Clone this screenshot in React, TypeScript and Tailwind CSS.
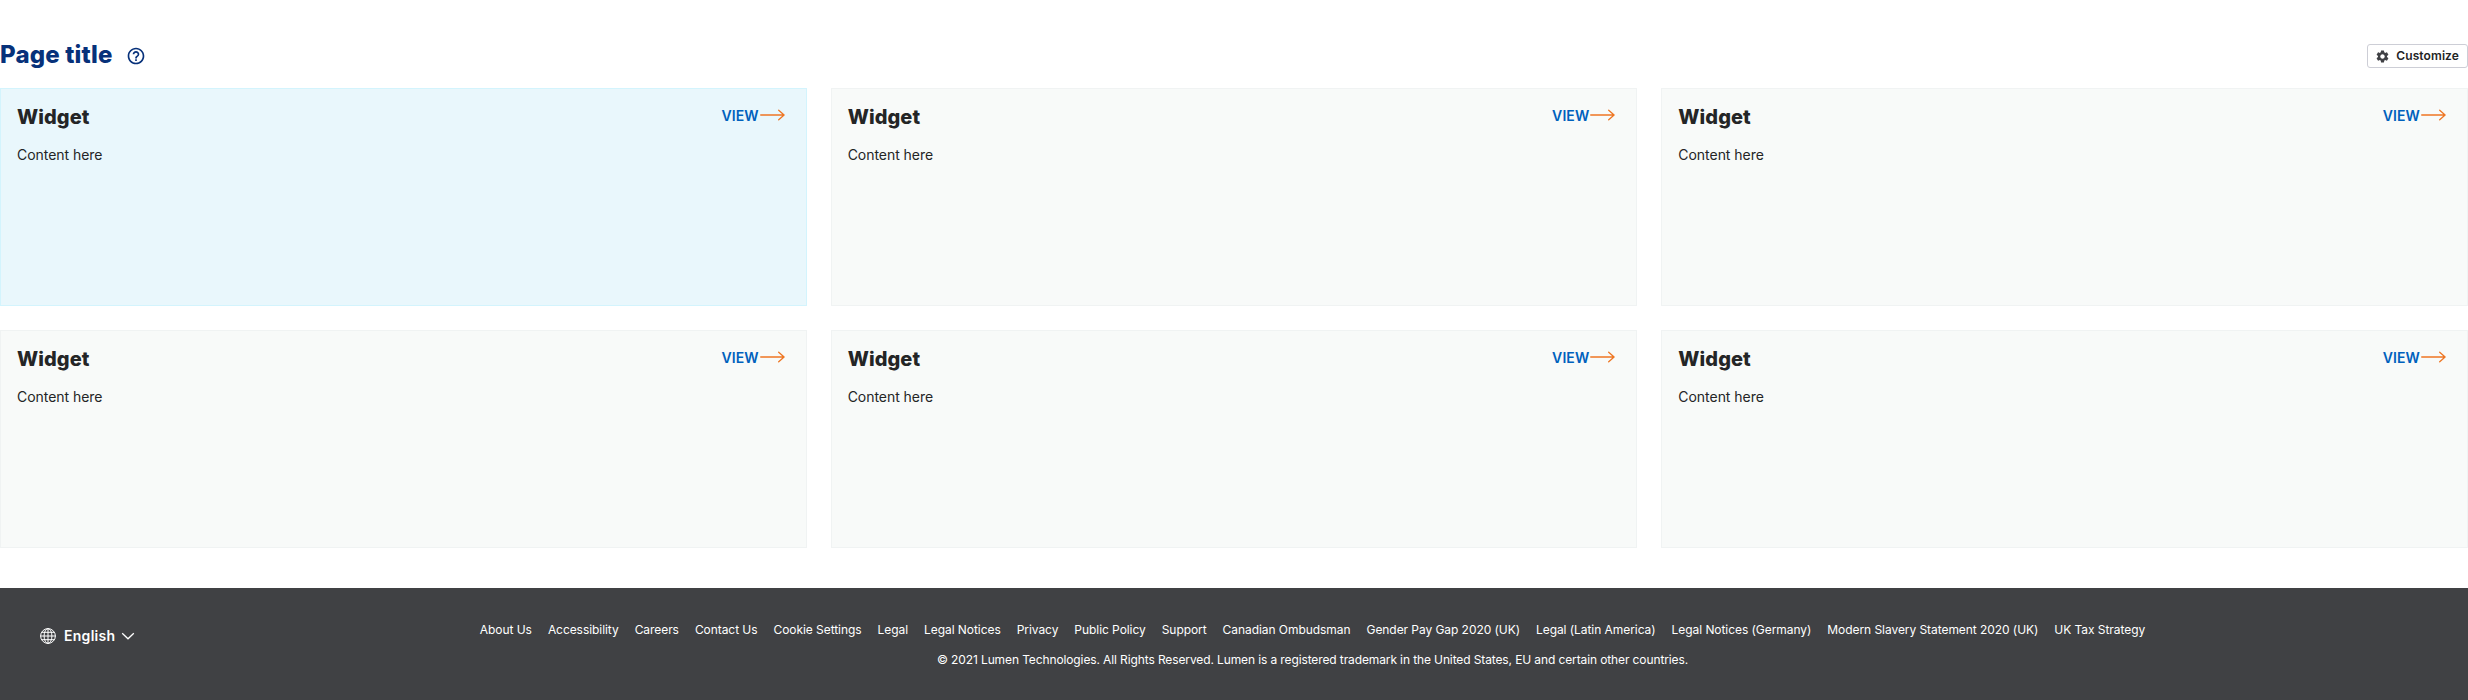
import { MdHelpOutline, MdSettings } from "react-icons/md";

const links = [
  "About Us",
  "Accessibility",
  "Careers",
  "Contact Us",
  "Cookie Settings",
  "Legal",
  "Legal Notices",
  "Privacy",
  "Public Policy",
  "Support",
  "Canadian Ombudsman",
  "Gender Pay Gap 2020 (UK)",
  "Legal (Latin America)",
  "Legal Notices (Germany)",
  "Modern Slavery Statement 2020 (UK)",
  "UK Tax Strategy",
];

function Widget({ active = false }: { active?: boolean }) {
  return (
    <section
      className={`h-[218px] border pt-[10px] pr-[21px] pl-4 ${
        active ? "border-[#d3f4fd] bg-[#e9f7fc]" : "border-[#f0f3f3] bg-[#f8faf9]"
      }`}
    >
      <div className="flex items-start justify-between">
        <h2 className="pt-1 text-[20px] leading-[28px] font-extrabold tracking-[0.08px] text-[#242526]">Widget</h2>
        <a className="flex h-8 items-center text-[14px] font-semibold tracking-[0.1px] text-[#0061bd]">
          VIEW
          <svg className="ml-px" width="25" height="12" viewBox="0 0 25 12" fill="none" stroke="#ee7623" strokeWidth="1.3" strokeLinecap="round" strokeLinejoin="round">
            <path d="M.7 6h23.4M18.7 1.2 24.1 6l-5.4 4.8" />
          </svg>
        </a>
      </div>
      <p className="mt-3 text-[14px] leading-[24px] tracking-[-0.04px] text-[#242526]">Content here</p>
    </section>
  );
}

export default function App() {
  return (
    <div className="flex h-[700px] flex-col bg-white font-['Inter',sans-serif]">
      <header className="flex h-[88px] items-center justify-between pt-[22px]">
        <div className="flex items-center">
          <h1 className="text-[24px] leading-8 font-extrabold tracking-[0.18px] text-[#07317a]">Page title</h1>
          <MdHelpOutline className="mt-[2px] ml-[13px] size-5 text-[#07317a]" />
        </div>
        <button className="mt-[2px] flex h-6 items-center rounded-[3px] border border-[#cdced6] pr-2 pl-[7px] text-[12px] font-semibold tracking-[0.1px] text-[#242526]">
          <MdSettings className="mr-[6px] size-[15px] text-[#404145]" />
          Customize
        </button>
      </header>
      <main className="grid grid-cols-3 gap-6">
        {Array.from({ length: 6 }, (_, i) => (
          <Widget key={i} active={i === 0} />
        ))}
      </main>
      <footer className="mt-10 flex flex-1 bg-[#404144] text-white">
        <div className="flex h-24 w-[157px] shrink-0 items-center pl-10 text-[14px] font-semibold">
          <svg width="16" height="16" viewBox="0 0 16 16" fill="none" stroke="currentColor" strokeWidth="1">
            <circle cx="8" cy="8" r="7.4" />
            <ellipse cx="8" cy="8" rx="3.9" ry="7.4" />
            <path d="M8 .5v15M.5 8h15M1.8 4.3h12.4M1.8 11.7h12.4" />
          </svg>
          <span className="-mt-px ml-2 tracking-[0.28px]">English</span>
          <svg className="ml-[6px]" width="14" height="8" viewBox="0 0 14 8" fill="none" stroke="currentColor" strokeWidth="1.3">
            <path d="m1.2 1.2 5.8 5.6 5.8-5.6" />
          </svg>
        </div>
        <div className="flex flex-1 flex-col items-center pt-[27px] text-[12px] leading-[30px]">
          <nav className="flex gap-4 tracking-[-0.06px]">
            {links.map((label) => (
              <a key={label}>{label}</a>
            ))}
          </nav>
          <p className="tracking-[-0.115px]">© 2021 Lumen Technologies. All Rights Reserved. Lumen is a registered trademark in the United States, EU and certain other countries.</p>
        </div>
      </footer>
    </div>
  );
}
